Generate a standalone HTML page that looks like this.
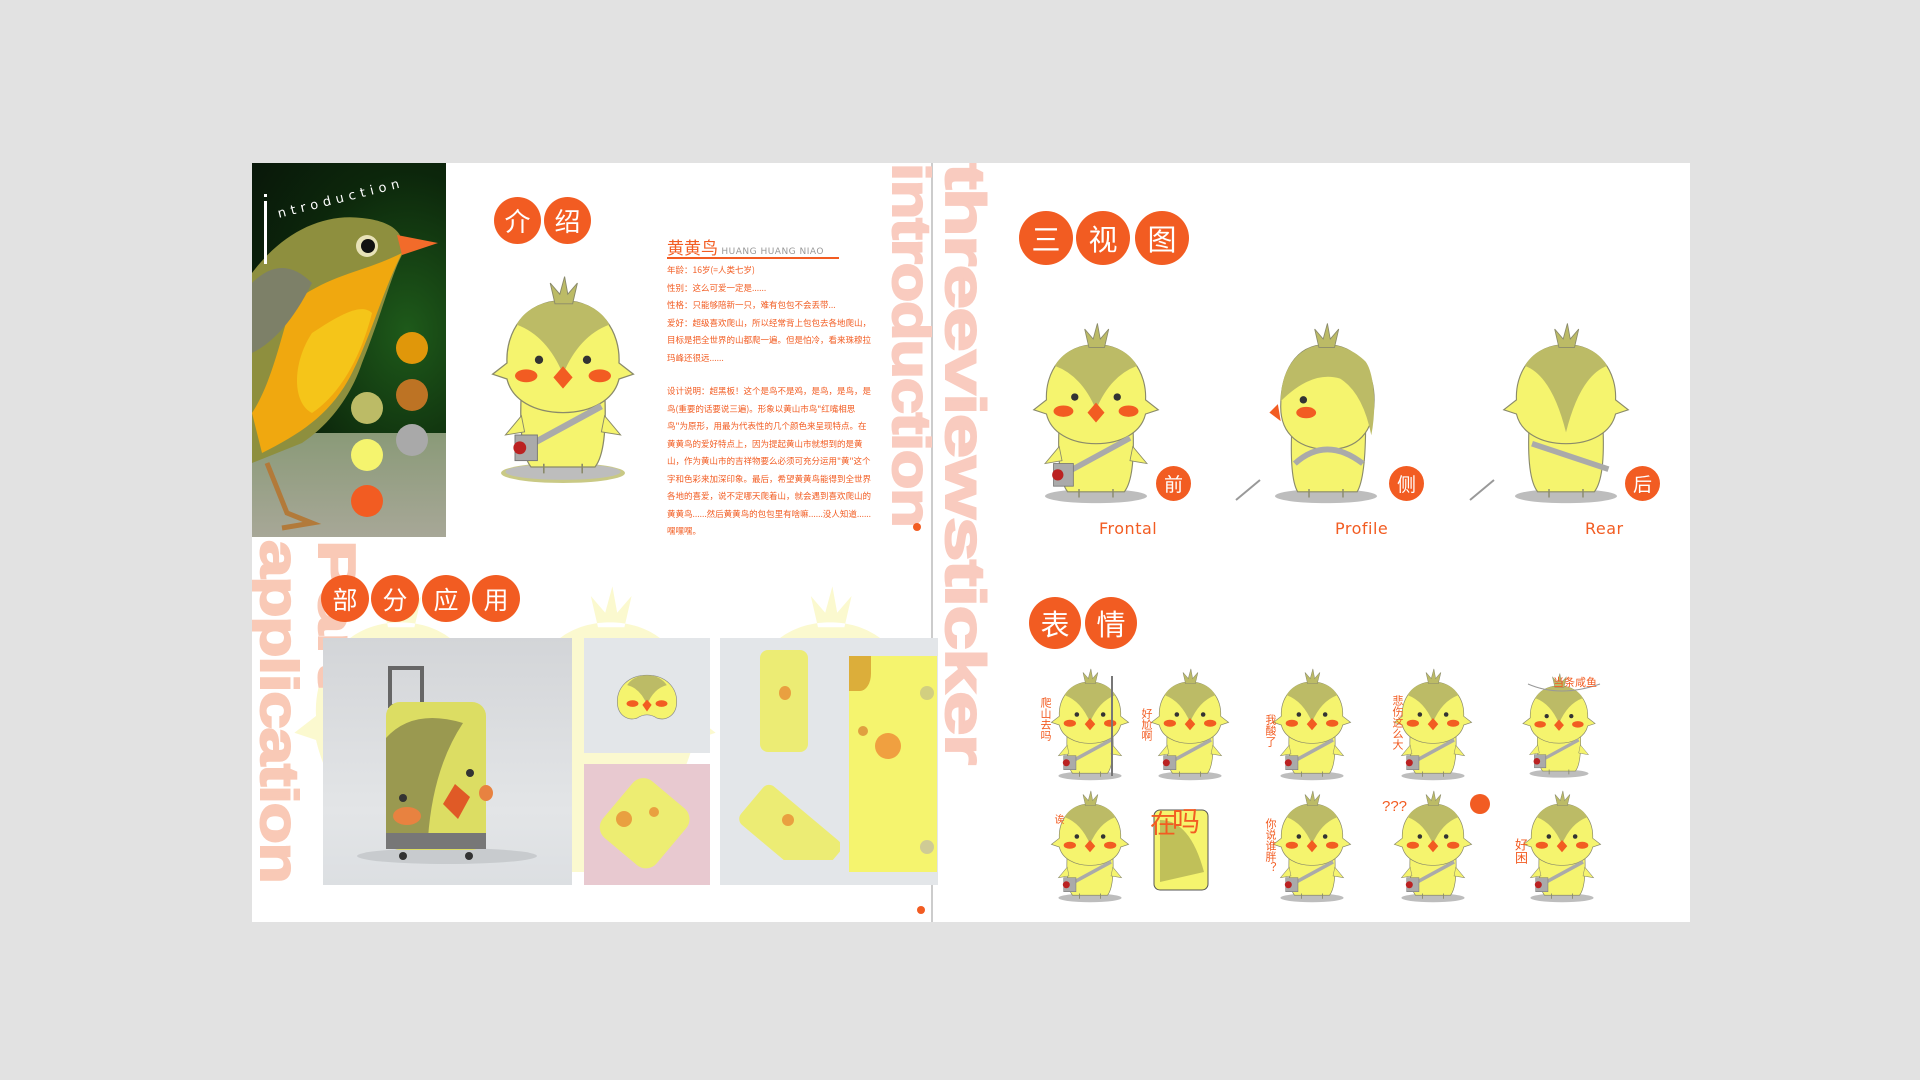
<!DOCTYPE html>
<html><head><meta charset="utf-8"><style>
*{margin:0;padding:0;box-sizing:border-box}
body{width:1920px;height:1080px;background:#e2e2e2;position:relative;overflow:hidden;font-family:"Liberation Sans","Noto Sans CJK SC",sans-serif}
.abs{position:absolute}
.c{position:absolute;background:#f25c22;color:#fff;border-radius:50%;display:flex;align-items:center;justify-content:center;font-family:"Noto Sans CJK SC",sans-serif}
.wrap{position:absolute;overflow:hidden}
.vt{position:absolute;left:0;top:0;writing-mode:vertical-rl;font-family:"Liberation Sans",sans-serif;font-weight:bold;color:#f9cbbf;letter-spacing:-1px;line-height:1;transform-origin:top left;white-space:nowrap;-webkit-text-stroke:2px #f9cbbf}
.txt{position:absolute;left:667px;color:#f25c22;font-size:8.5px;font-family:"Noto Sans CJK SC",sans-serif;line-height:17.5px;width:205px}
.lbl{position:absolute;color:#f25c22;font-size:16px;font-family:"DejaVu Sans",sans-serif;letter-spacing:.5px}
.st{position:absolute;color:#f25c22;font-size:11px;font-family:"Noto Sans CJK SC",sans-serif;writing-mode:vertical-rl;line-height:1}
</style></head><body>
<svg width="0" height="0" style="position:absolute">
<defs>
<symbol id="ck" viewBox="0 0 100 130">
<ellipse cx="50" cy="123" rx="36" ry="5" fill="#bdbdbd"/>
<path d="M24 72 Q22 110 30 120 L70 120 Q78 110 76 72 Z" fill="#f5f46e" stroke="#8a8a6a" stroke-width=".8"/>
<path d="M24 88 L14 100 L26 98Z M76 88 L86 100 L74 98Z" fill="#f5f46e" stroke="#8a8a6a" stroke-width=".6"/>
<path d="M50 16 C26 16 14 36 15 55 L6 62 L15 65 C18 78 32 86 50 86 C68 86 82 78 85 65 L94 62 L85 55 C86 36 74 16 50 16Z" fill="#f5f46e" stroke="#8a8a6a" stroke-width=".8"/>
<path d="M50 16 C36 16 26 22 21 31 Q40 38 50 62 Q60 38 79 31 C74 22 64 16 50 16Z" fill="#bcbb66"/>
<path d="M45 18 L42 5 L48 12 L51 1 L53 12 L59 5 L56 18Z" fill="#bcbb66" stroke="#8a8a6a" stroke-width=".6"/>
<circle cx="35" cy="53" r="2.6" fill="#333"/><circle cx="65" cy="53" r="2.6" fill="#333"/>
<ellipse cx="27" cy="63" rx="7" ry="4" fill="#f25c22"/><ellipse cx="73" cy="63" rx="7" ry="4" fill="#f25c22"/>
<path d="M50 57 L56 64 L50 71 L44 64Z" fill="#f25c22"/>
<path d="M74 82 L30 106" stroke="#aaa" stroke-width="4"/>
<rect x="20" y="100" width="14" height="16" fill="#aaa" stroke="#777" stroke-width=".6"/>
<circle cx="23" cy="108" r="4" fill="#b22"/>
<path d="M38 118 V124 M62 118 V124" stroke="#8a8a6a"/>
</symbol>
<symbol id="ckr" viewBox="0 0 100 130">
<ellipse cx="50" cy="123" rx="36" ry="5" fill="#bdbdbd"/>
<path d="M24 72 Q22 110 30 120 L70 120 Q78 110 76 72 Z" fill="#f5f46e" stroke="#8a8a6a" stroke-width=".8"/>
<path d="M50 16 C26 16 14 36 15 55 L6 62 L15 65 C18 78 32 86 50 86 C68 86 82 78 85 65 L94 62 L85 55 C86 36 74 16 50 16Z" fill="#f5f46e" stroke="#8a8a6a" stroke-width=".8"/>
<path d="M50 16 C36 16 26 22 21 31 Q40 38 50 78 Q60 38 79 31 C74 22 64 16 50 16Z" fill="#bcbb66"/>
<path d="M45 18 L42 5 L48 12 L51 1 L53 12 L59 5 L56 18Z" fill="#bcbb66" stroke="#8a8a6a" stroke-width=".6"/>
<path d="M26 86 L80 104" stroke="#aaa" stroke-width="4"/>
<path d="M38 118 V124 M62 118 V124" stroke="#8a8a6a"/>
</symbol>
<symbol id="ckp" viewBox="0 0 100 130">
<ellipse cx="50" cy="123" rx="36" ry="5" fill="#bdbdbd"/>
<path d="M26 72 Q24 110 30 120 L72 120 Q78 110 78 72 Z" fill="#f5f46e" stroke="#8a8a6a" stroke-width=".8"/>
<path d="M50 16 C28 16 18 36 18 60 C18 80 32 90 52 90 C72 90 84 78 84 55 C84 34 72 16 50 16Z" fill="#f5f46e" stroke="#8a8a6a" stroke-width=".8"/>
<path d="M50 16 C30 16 18 34 18 56 Q40 34 60 40 Q76 50 82 80 C86 60 84 36 78 28 C70 20 60 16 50 16Z" fill="#bcbb66"/>
<path d="M45 18 L42 5 L48 12 L51 1 L53 12 L59 5 L56 18Z" fill="#bcbb66" stroke="#8a8a6a" stroke-width=".6"/>
<circle cx="34" cy="55" r="2.6" fill="#333"/><ellipse cx="36" cy="64" rx="7" ry="4" fill="#f25c22"/>
<path d="M16 58 L10 64 L18 70Z" fill="#f25c22"/>
<path d="M28 100 Q50 80 76 100" stroke="#aaa" stroke-width="4" fill="none"/>
<path d="M38 118 V124 M62 118 V124" stroke="#8a8a6a"/>
</symbol>
<symbol id="sil" viewBox="0 0 100 130">
<path d="M50 16 C26 16 14 36 15 55 L6 62 L15 65 C18 78 24 86 24 90 Q22 110 30 120 L70 120 Q78 110 76 90 C76 86 82 78 85 65 L94 62 L85 55 C86 36 74 16 50 16Z M45 18 L42 5 L48 12 L51 1 L53 12 L59 5 L56 18Z" fill="#fbf9cf"/>
</symbol>
</defs></svg>

<div class="abs" style="left:252px;top:163px;width:1438px;height:759px;background:#fff"></div>
<svg class="abs" style="left:260px;top:540px" width="680" height="382" viewBox="0 0 680 382">
<use href="#sil" x="20" y="0" width="240" height="400"/>
<use href="#sil" x="230" y="0" width="240" height="400"/>
<use href="#sil" x="450" y="0" width="240" height="400"/>
</svg>
<div class="abs" style="left:931px;top:163px;width:2px;height:759px;background:#ccc"></div>

<div class="abs" style="left:252px;top:163px;width:194px;height:374px;overflow:hidden;background:radial-gradient(ellipse at 80% 45%,#1e5a1a 0%,#0c260b 55%,#08140a 100%)">
<div class="abs" style="left:0;top:270px;width:194px;height:110px;background:linear-gradient(#8a9a78,#a9a899)"></div>
<svg class="abs" style="left:0;top:0" width="194" height="374" viewBox="0 0 194 374">
<path d="M0 110 C30 70 70 50 110 55 C140 58 150 70 150 80 L170 80 L150 92 C140 110 130 150 110 200 C100 230 80 260 50 280 L0 300Z" fill="#8e8f3e"/>
<path d="M40 140 C80 110 110 110 150 90 C130 130 120 170 100 210 C80 250 50 270 10 290 L0 250 C20 220 30 170 40 140Z" fill="#f0a80f"/>
<path d="M60 170 C90 150 110 140 120 150 C110 190 90 230 60 250 C40 240 40 200 60 170Z" fill="#f5c519"/>
<path d="M0 120 C20 100 40 100 60 120 C40 160 20 180 0 190Z" fill="#7d8068"/>
<circle cx="115" cy="83" r="11" fill="#e8e2b8"/><circle cx="116" cy="83" r="7" fill="#111"/>
<path d="M145 72 L186 80 L150 92Z" fill="#f26b2a"/>
<path d="M15 300 L35 350 L60 360 L30 365" stroke="#b27a3a" stroke-width="5" fill="none"/>
</svg>
<div class="abs" style="left:12px;top:38px;width:3px;height:63px;background:#fff"></div>
<div class="abs" style="left:12px;top:31px;width:3px;height:3px;background:#fff"></div>
<div class="abs" style="left:26px;top:44px;color:#fff;font-size:13px;font-family:'DejaVu Sans',sans-serif;transform:rotate(-14deg);transform-origin:left;letter-spacing:5px">ntroduction</div>
<div class="abs" style="left:144px;top:169px;width:32px;height:32px;border-radius:50%;background:#e0970a"></div>
<div class="abs" style="left:144px;top:216px;width:32px;height:32px;border-radius:50%;background:#bd7324"></div>
<div class="abs" style="left:144px;top:261px;width:32px;height:32px;border-radius:50%;background:#a9a9a9"></div>
<div class="abs" style="left:99px;top:229px;width:32px;height:32px;border-radius:50%;background:#bcbb66"></div>
<div class="abs" style="left:99px;top:276px;width:32px;height:32px;border-radius:50%;background:#f5f46e"></div>
<div class="abs" style="left:99px;top:322px;width:32px;height:32px;border-radius:50%;background:#f25c22"></div>
</div>

<div class="wrap" style="left:884px;top:163px;width:48px;height:374px"><div class="vt" style="font-size:54px;transform:scaleY(1.2)">introduction</div></div>
<div class="wrap" style="left:937px;top:163px;width:52px;height:612px"><div class="vt" style="font-size:56px;transform:scaleY(1.42)">threeviewsticker</div></div>
<div class="wrap" style="left:252px;top:540px;width:48px;height:352px"><div class="vt" style="font-size:54px;transform:scaleY(1.25);color:#f9c9b6;-webkit-text-stroke-color:#f9c9b6">application</div></div>
<div class="wrap" style="left:310px;top:540px;width:46px;height:200px"><div class="vt" style="font-size:52px;transform:scaleY(1.5);color:#f9c9b6;-webkit-text-stroke-color:#f9c9b6">Part</div></div>

<div class="c" style="left:494px;top:197px;width:47px;height:47px;font-size:26px">介</div>
<div class="c" style="left:544px;top:197px;width:47px;height:47px;font-size:26px">绍</div>
<svg class="abs" style="left:483px;top:273px" width="160" height="212"><ellipse cx="80" cy="200" rx="62" ry="10" fill="#bcbb66" opacity=".8"/><use href="#ck" width="160" height="212"/></svg>

<div class="abs" style="left:667px;top:237px;color:#f25c22;font-size:17px;font-family:'Noto Sans CJK SC',sans-serif;line-height:20px">黄黄鸟<span style="font-size:9px;color:#999;font-family:'DejaVu Sans',sans-serif;letter-spacing:.5px"> HUANG HUANG NIAO</span></div>
<div class="abs" style="left:667px;top:257px;width:172px;height:2px;background:#f25c22"></div>
<div class="txt" style="top:262px">年龄：16岁(=人类七岁)<br>性别：这么可爱一定是......<br>性格：只能够陪新一只，难有包包不会丢带...<br>爱好：超级喜欢爬山，所以经常背上包包去各地爬山，目标是把全世界的山都爬一遍。但是怕冷，看来珠穆拉玛峰还很远......</div>
<div class="txt" style="top:383px">设计说明：超黑板！这个是鸟不是鸡，是鸟，是鸟，是鸟(重要的话要说三遍)。形象以黄山市鸟"红嘴相思鸟"为原形，用最为代表性的几个颜色来呈现特点。在黄黄鸟的爱好特点上，因为提起黄山市就想到的是黄山，作为黄山市的吉祥物要么必须可充分运用"黄"这个字和色彩来加深印象。最后，希望黄黄鸟能得到全世界各地的喜爱，说不定哪天爬着山，就会遇到喜欢爬山的黄黄鸟......然后黄黄鸟的包包里有啥嘛......没人知道......嘿嘿嘿。</div>
<div class="abs" style="left:913px;top:523px;width:8px;height:8px;border-radius:50%;background:#f25c22"></div>

<div class="c" style="left:321px;top:575px;width:48px;height:47px;font-size:25px">部</div>
<div class="c" style="left:371px;top:575px;width:48px;height:47px;font-size:25px">分</div>
<div class="c" style="left:422px;top:575px;width:48px;height:47px;font-size:25px">应</div>
<div class="c" style="left:472px;top:575px;width:48px;height:47px;font-size:25px">用</div>

<div class="abs" style="left:323px;top:638px;width:249px;height:247px;background:linear-gradient(#d3d5d8,#e3e5e7 70%,#dcdfe2)"></div>
<svg class="abs" style="left:323px;top:638px" width="249" height="247">
<ellipse cx="124" cy="218" rx="90" ry="8" fill="#b9bcbf" opacity=".6"/>
<rect x="67" y="30" width="32" height="38" fill="none" stroke="#666" stroke-width="4"/>
<rect x="63" y="64" width="100" height="148" rx="14" fill="#dcdd63"/>
<path d="M63 100 Q90 70 140 85 Q110 130 105 200 L63 200Z" fill="#9a9950"/>
<ellipse cx="84" cy="178" rx="14" ry="9" fill="#e88240"/>
<ellipse cx="163" cy="155" rx="7" ry="8" fill="#e88240"/>
<path d="M132 146 L147 159 L135 181 L120 166Z" fill="#e05a26"/>
<circle cx="80" cy="160" r="4" fill="#333"/><circle cx="147" cy="135" r="4" fill="#333"/>
<rect x="63" y="195" width="100" height="16" fill="#777"/>
<circle cx="80" cy="218" r="4" fill="#333"/><circle cx="146" cy="218" r="4" fill="#333"/>
</svg>
<div class="abs" style="left:584px;top:638px;width:126px;height:115px;background:#e3e6e9"></div>
<svg class="abs" style="left:614px;top:665px" width="66" height="60" viewBox="0 0 100 90"><path d="M50 15 C20 15 5 35 5 55 C5 75 20 85 35 80 Q50 70 65 80 C80 85 95 75 95 55 C95 35 80 15 50 15Z" fill="#f5f46e" stroke="#888"/><path d="M50 15 C35 15 25 22 20 30 Q40 35 50 60 Q60 35 80 30 C75 22 65 15 50 15Z" fill="#bcbb66"/><ellipse cx="28" cy="58" rx="9" ry="5" fill="#f25c22"/><ellipse cx="72" cy="58" rx="9" ry="5" fill="#f25c22"/><path d="M50 52 L57 60 L50 70 L43 60Z" fill="#f25c22"/></svg>
<div class="abs" style="left:584px;top:764px;width:126px;height:121px;background:#e8c9d0"></div>
<svg class="abs" style="left:584px;top:764px" width="126" height="121"><rect x="25" y="22" width="70" height="74" rx="14" fill="#eded72" transform="rotate(40 60 60)"/><circle cx="40" cy="55" r="8" fill="#e9a040"/><circle cx="70" cy="48" r="5" fill="#e9a040"/></svg>
<div class="abs" style="left:720px;top:638px;width:218px;height:247px;background:#e3e6e9"></div>
<div class="abs" style="left:760px;top:650px;width:48px;height:102px;border-radius:8px;background:#ecec74"></div>
<div class="abs" style="left:779px;top:686px;width:12px;height:14px;border-radius:50%;background:#e9a040"></div>
<svg class="abs" style="left:720px;top:780px" width="120" height="80"><rect x="30" y="10" width="50" height="100" rx="8" fill="#ecec74" transform="rotate(-50 55 40)"/><circle cx="68" cy="40" r="6" fill="#e9a040"/></svg>
<div class="abs" style="left:849px;top:656px;width:88px;height:216px;background:#f5f46e"></div>
<div class="abs" style="left:849px;top:656px;width:22px;height:35px;border-radius:0 0 50% 0;background:#dcae3a"></div>
<div class="abs" style="left:875px;top:733px;width:26px;height:26px;border-radius:50%;background:#f0a040"></div>
<div class="abs" style="left:858px;top:726px;width:10px;height:10px;border-radius:50%;background:#e0a040"></div>
<div class="abs" style="left:920px;top:686px;width:14px;height:14px;border-radius:50%;background:#d2cf80"></div>
<div class="abs" style="left:920px;top:840px;width:14px;height:14px;border-radius:50%;background:#cfcb95"></div>
<div class="abs" style="left:917px;top:906px;width:8px;height:8px;border-radius:50%;background:#f25c22"></div>

<div class="c" style="left:1019px;top:211px;width:54px;height:54px;font-size:29px">三</div>
<div class="c" style="left:1076px;top:211px;width:54px;height:54px;font-size:29px">视</div>
<div class="c" style="left:1135px;top:211px;width:54px;height:54px;font-size:29px">图</div>
<svg class="abs" style="left:1020px;top:322px" width="152" height="184"><use href="#ck" width="152" height="184"/></svg>
<svg class="abs" style="left:1250px;top:322px" width="152" height="184"><use href="#ckp" width="152" height="184"/></svg>
<svg class="abs" style="left:1490px;top:322px" width="152" height="184"><use href="#ckr" width="152" height="184"/></svg>
<div class="c" style="left:1156px;top:466px;width:35px;height:35px;font-size:19px">前</div>
<div class="c" style="left:1389px;top:466px;width:35px;height:35px;font-size:19px">侧</div>
<div class="c" style="left:1625px;top:466px;width:35px;height:35px;font-size:19px">后</div>
<svg class="abs" style="left:1234px;top:478px" width="30" height="24"><path d="M2 22 L26 2" stroke="#999" stroke-width="2"/></svg>
<svg class="abs" style="left:1468px;top:478px" width="30" height="24"><path d="M2 22 L26 2" stroke="#999" stroke-width="2"/></svg>
<div class="lbl" style="left:1099px;top:519px">Frontal</div>
<div class="lbl" style="left:1335px;top:519px">Profile</div>
<div class="lbl" style="left:1585px;top:519px">Rear</div>

<div class="c" style="left:1029px;top:597px;width:52px;height:52px;font-size:29px">表</div>
<div class="c" style="left:1085px;top:597px;width:52px;height:52px;font-size:29px">情</div>

<svg class="abs" style="left:1040px;top:668px" width="620" height="250">
<use href="#ck" x="6" y="0" width="88" height="114"/>
<use href="#ck" x="106" y="0" width="88" height="114"/>
<use href="#ck" x="228" y="0" width="88" height="114"/>
<use href="#ck" x="349" y="0" width="88" height="114"/>
<use href="#ck" x="478" y="4" width="82" height="108"/>
<use href="#ck" x="6" y="122" width="88" height="114"/>
<rect x="114" y="142" width="54" height="80" rx="6" fill="#f5f46e" stroke="#555"/>
<path d="M120 152 Q150 152 164 204 L120 214Z" fill="#a9a950" opacity=".7"/>
<use href="#ck" x="228" y="122" width="88" height="114"/>
<use href="#ck" x="349" y="122" width="88" height="114"/>
<use href="#ck" x="478" y="122" width="88" height="114"/>
<path d="M72 8 V108" stroke="#777" stroke-width="2"/>
<path d="M488 16 Q520 30 560 16" stroke="#999" fill="none"/>
<circle cx="440" cy="136" r="10" fill="#f25c22"/>
</svg>
<div class="st" style="left:1040px;top:697px">爬山去吗</div>
<div class="st" style="left:1141px;top:708px">好尬啊</div>
<div class="st" style="left:1265px;top:714px">我酸了</div>
<div class="st" style="left:1392px;top:695px">悲伤这么大</div>
<div class="abs" style="left:1553px;top:674px;color:#f25c22;font-size:11px;font-family:'Noto Sans CJK SC',sans-serif">当条咸鱼</div>
<div class="st" style="left:1054px;top:814px;font-size:10px">诶</div>
<div class="abs" style="left:1150px;top:804px;color:#f25c22;font-size:26px;font-family:'Noto Sans CJK SC',sans-serif">在</div>
<div class="abs" style="left:1172px;top:800px;color:#f25c22;font-size:28px;font-family:'Noto Sans CJK SC',sans-serif">吗</div>
<div class="st" style="left:1265px;top:818px">你说谁胖？</div>
<div class="abs" style="left:1382px;top:798px;color:#f25c22;font-size:15px">???</div>
<div class="st" style="left:1515px;top:838px;font-size:13px">好困</div>
</body></html>
